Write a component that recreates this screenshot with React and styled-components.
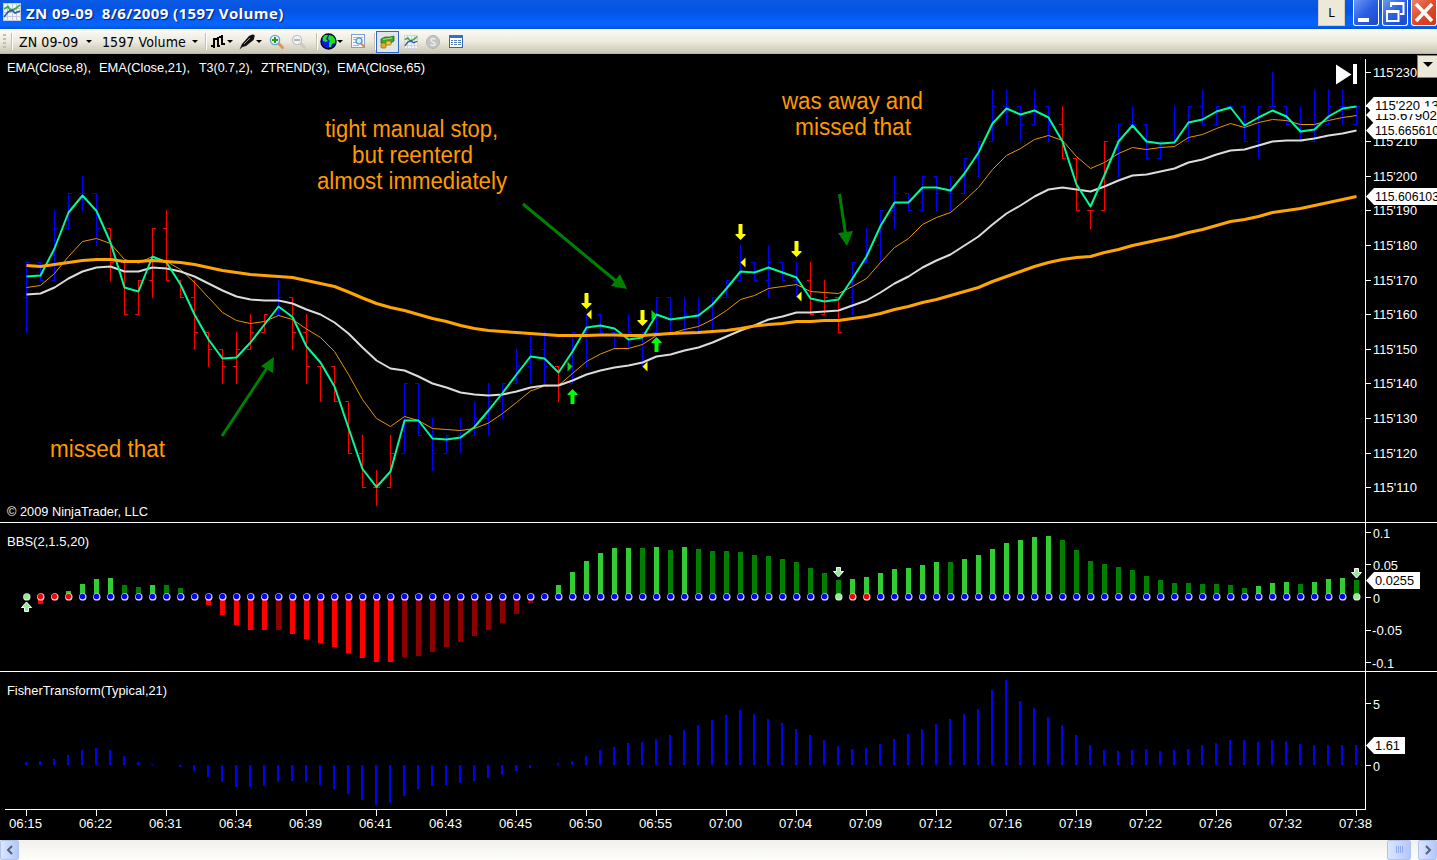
import React from 'react'
import styled, { createGlobalStyle } from 'styled-components'

const FIRST_X = 26
const STEP = 14
const xOf = i => FIRST_X + i * STEP
// one level is half a tick, level 0 is 115'230
const levelY = l => Math.round(71.7 + l * 17.32)

// [high, low, open, close] in levels
const bars = [
  [11,15,13,11],[11,12,11,12],[8,12,12,9],[7,9,9,7],[6,8,7,7],[7,10,7,9],[9,12,9,11],[11,14,11,14],
  [12,14,14,12],[9,13,12,9],[8,12,9,12],[12,13,12,13],[12,16,13,15],[15,17,15,16],[16,18,16,17],[15,18,17,16],
  [14,16,16,15],[14,15,15,14],[12,14,14,13],[13,16,13,15],[14,18,15,17],[17,19,17,17],[17,19,17,19],[19,22,19,22],
  [21,24,22,24],[23,25,24,24],[21,24,24,22],[18,22,22,18],[18,21,18,21],[20,23,21,22],[21,22,22,21],[20,22,21,21],
  [19,21,21,20],[18,21,20,19],[18,20,19,18],[16,18,18,17],[15,18,17,16],[15,18,16,17],[17,19,17,18],[15,18,18,15],
  [14,17,15,14],[14,15,14,15],[15,16,15,16],[14,16,16,15],[15,17,16,15],[13,15,15,13],[13,15,13,15],[13,15,15,14],
  [13,15,14,14],[13,15,15,13],[12,13,13,12],[10,12,12,11],[11,12,11,12],[10,13,12,11],[11,12,11,12],[11,13,12,13],
  [11,14,12,14],[12,14,14,13],[13,15,13,15],[11,14,13,11],[9,11,11,10],[8,11,10,8],[6,9,8,7],[7,8,7,8],
  [6,8,8,6],[6,8,6,7],[6,8,7,7],[5,7,7,5],[4,6,5,4],[1,4,4,2],[1,3,2,2],[2,4,2,3],
  [1,3,3,2],[2,4,2,3],[2,5,3,5],[5,8,5,8],[8,9,8,8],[4,8,8,4],[3,6,4,3],[2,3,3,3],
  [3,5,3,5],[4,5,5,4],[2,4,4,4],[2,4,4,2],[1,3,2,3],[2,3,3,2],[2,2,2,2],[2,4,2,4],
  [2,5,4,2],[0,2,2,2],[2,3,2,3],[2,4,3,4],[1,4,4,3],[1,3,3,2],[1,3,2,2],[2,3,3,2],
]
const isRed = i => (i >= 6 && i <= 17) || (i >= 19 && i <= 26) || i === 38 || (i >= 56 && i <= 58) || (i >= 74 && i <= 77)

const t3 = [
  276.5,275.5,248.5,212.5,195.5,211,242.5,287.5,291.5,256.5,262.5,284.5,314.5,339.5,358.5,357.5,342.5,324.5,306.5,317,
  346.5,362.5,386.5,428,469,487,471.5,420.5,420.5,438.5,439.5,437.5,427,410.5,393,374.5,356.5,358.5,372.5,351.5,
  327.5,325.5,328.5,339.5,337.5,314.5,319.5,317.5,315.5,304.5,288.5,271.5,272.5,267.5,272.5,277.5,298.5,301.5,299.5,278.5,
  256.5,226,202.5,202.5,187.5,187.5,190.5,173.5,152.5,123.5,108.5,114.5,110.5,117.5,141.5,184.5,206.5,175,141.5,125.5,
  141.5,143.5,142.5,122.5,119.5,111.5,107.5,125.5,117.5,110.5,116.5,131.5,129.5,116.5,108.5,106.5,
]
const ema8 = [
  287.5,285.5,273.5,256.5,241.5,238.5,243.5,259.5,263,256.5,261.5,269.5,282.5,297.5,312.5,320.5,323.5,321.5,315.5,319.5,
  329,337.5,351.5,374.5,399.5,418.5,426.5,416.5,420.5,428.5,429.5,430.5,428.5,423,413.5,402.5,391,386,385.5,373.5,
  361.5,354,348.5,348.5,344.5,335.5,333.5,329.5,326.5,319.5,310.5,299.5,295.5,288.5,286.5,284.5,291.5,292.5,293.5,286.5,
  278.5,262.5,247.5,238.5,224.5,217.5,212.5,200.5,187.5,169.5,155.5,148.5,139.5,135.5,140.5,156.5,168.5,162.5,153.5,147.5,
  149.5,147.5,146.5,137.5,134.5,128.5,123.5,127.5,122.5,119.5,120.5,124.5,124.5,120.5,117.5,115.5,
]
const ema21 = [
  294.5,293.5,287.5,278.5,271.5,267.5,266.5,271.5,271.5,267.5,268.5,271.5,276.5,283.5,290.5,296.5,299.5,300.5,300.5,303.5,
  309.5,314.5,322.5,333.5,347.5,360.5,368.5,370.5,376.5,383.5,387.5,392.5,394.5,395.5,394.5,391.5,387.5,385.5,385.5,380.5,
  374.5,370.5,367.5,365.5,362.5,356.5,354.5,350.5,347.5,342.5,336.5,330.5,325.5,319.5,316.5,312.5,312.5,311.5,310.5,305.5,
  300.5,292.5,283.5,276.5,267.5,260.5,254.5,245.5,236.5,224.5,213.5,205.5,196.5,189.5,187.5,189.5,191.5,186.5,180.5,175.5,
  174.5,171.5,168.5,162.5,159.5,154.5,150.5,149.5,145.5,141.5,140.5,140.5,138.5,135.5,133.5,130.5,
]
const ema65 = [
  265.5,266.5,264.5,262.5,260.5,259.5,259.5,261.5,261.5,260.5,261.5,262.5,264.5,267.5,270.5,272.5,274.5,275.5,276.5,277.5,
  280.5,283.5,286.5,292,298,303.5,307.5,310.5,314.5,318.5,321.5,325.5,328.5,330.5,331.5,332.5,333.5,334.5,335.5,335.5,
  335.5,335,335,335.5,335.5,334.5,333.5,333,332.5,331.5,330.5,328.5,326,324.5,323.5,321.5,321.5,320.5,320.5,318.5,
  316.5,313.5,309.5,306.5,302.5,299.5,295.5,291.5,287.5,281.5,276.5,271.5,266.5,262.5,259.5,257.5,256.5,252.5,249.5,245.5,
  242.5,239.5,236.5,232.5,229.5,225.5,221.5,219.5,216.5,212.5,210.5,208.5,205.5,202.5,199.5,196.5,
]

// end of every BBS bar; g/G rising and fading green, r/R rising and fading red
const bbs = '- r604 - g591 g584 g579 g578 G585 G587 g585 G585 G588 - r605 r615 r625 r630 r630 R630 r634 r639 r643 r647 r653 r658 r662 r662 R657 R656 R652 R647 R642 R636 R630 R623 R614 R603 - g585 g572 g561 g553 g548 g548 G548 g547 G550 g547 G549 G551 G551 G552 G555 G556 G559 G562 G568 G573 G580 g579 g577 g573 g569 g568 g565 g562 G562 g559 g555 g549 g543 g540 g537 g536 G540 G550 G561 G564 G567 G570 G576 G580 G583 G583 G584 G584 G585 G588 g586 g583 g582 G584 g582 g579 g578 G580'.split(' ')
const bbsColors = { g: '#32cd32', G: '#008000', r: '#ff0000', R: '#8b0000' }
const dotColor = i => {
  if (i === 0 || i === 58 || i === 95) return '#90ee90'
  if ((i > 0 && i < 4) || i === 59 || i === 60) return '#ff0000'
  return '#0000ff'
}

const fisher = [
  762,761,759,755,750,748,750,756,762,764,765,767,771,777,782,787,787,786,782,781,782,785,789,794,800,805,803,796,789,786,
  785,783,781,778,775,771,768,765,763,761,756,750,747,743,742,739,735,730,725,720,715,710,714,719,723,729,735,740,746,749,
  748,744,739,734,729,724,719,714,709,690,680,701,708,717,725,735,745,750,751,750,749,751,750,749,745,743,740,740,742,740,
  741,744,745,745,745,745,
]

const times = ['06:15','06:22','06:31','06:34','06:39','06:41','06:43','06:45','06:50','06:55','07:00','07:04','07:09','07:12','07:16','07:19','07:22','07:26','07:32','07:38']
const prices = ["115'230","115'220","115'210","115'200","115'190","115'180","115'170","115'160","115'150","115'140","115'130","115'120","115'110"]

const toPoints = ys => ys.map((y, i) => `${xOf(i) + 0.5},${y}`).join(' ')

const Label = ({ x, y, w, children, fill = '#fff' }) => (
  <ChartText x={x} y={y} fill={fill} textLength={w} lengthAdjust="spacingAndGlyphs">{children}</ChartText>
)

const Tag = ({ y, w, textW, children }) => (
  <g>
    <path d={`M1366 ${y} L1374 ${y - 8.5} H${1366 + w} V${y + 8.5} H1374 Z`} fill="#fff" />
    <Label x={1375} y={y + 4.5} w={textW} fill="#000">{children}</Label>
  </g>
)

const DownArrow = ({ x, y }) => (
  <path d={`M${x - 2} ${y} h4 v10 h3 v1 l-5 5 l-5 -5 v-1 h3 z`} fill="#ffff00" />
)
const UpArrow = ({ x, y }) => (
  <path d={`M${x - 2} ${y + 15} h4 v-9 h3 v-1 l-5 -5 l-5 5 v1 h3 z`} fill="#00ff00" />
)

const Note = ({ x, y, w, children }) => (
  <NoteText x={x} y={y} textLength={w} lengthAdjust="spacingAndGlyphs">{children}</NoteText>
)

const PricePanel = () => (
  <Panel height={469}>
    <Plot viewBox="0 54 1437 469" height="469">
      <path d="M0 522.5 H1437 M1365.5 59 V523" stroke="#fff" />
      <g shapeRendering="crispEdges">
        {bars.map(([h, l, o, c], i) => (
          <path
            key={i}
            d={`M${xOf(i) + 0.5} ${levelY(h)} V${levelY(l) + 1} M${xOf(i) - 3} ${levelY(o) + 0.5} h3 M${xOf(i) + 1} ${levelY(c) + 0.5} h3`}
            stroke={isRed(i) ? '#ff0000' : '#0000ff'}
          />
        ))}
      </g>
      <Line points={toPoints(ema8)} stroke="#e89600" strokeWidth="1" />
      <Line points={toPoints(ema21)} stroke="#dcdcdc" strokeWidth="2" />
      <Line points={toPoints(t3)} stroke="#00fa9a" strokeWidth="2" />
      <Line points={toPoints(ema65)} stroke="#ffa500" strokeWidth="3" />

      <DownArrow x={586.5} y={293} />
      <DownArrow x={642.5} y={310} />
      <DownArrow x={740.5} y={224} />
      <DownArrow x={796.5} y={241} />
      <UpArrow x={572.5} y={389} />
      <UpArrow x={656.5} y={337} />
      <path d="M586.5 314.5 l5 -5 v10 z M642.5 366.5 l5 -5 v10 z M740.5 262.5 l5 -5 v10 z M796.5 296.5 l5 -5 v10 z" fill="#ffff00" />
      <path d="M572.5 366.5 l-5 -5 v10 z M656.5 315 l-5 -5 v10 z" fill="#00e000" />

      <g stroke="#008000" strokeWidth="3" fill="#008000">
        <path d="M222 436 L267 368 M523 204 L616 281 M839.5 194 L845.5 234" />
        <path d="M274 357 L261 366 L273 373 Z M627 289 L620 274 L611 286 Z M847 246 L838 233 L853 231 Z" stroke="none" />
      </g>

      <Note x={50} y={457} w={115}>missed that</Note>
      <Note x={325} y={137} w={173}>tight manual stop,</Note>
      <Note x={352} y={163} w={121}>but reenterd</Note>
      <Note x={317} y={189} w={190}>almost immediately</Note>
      <Note x={782} y={109} w={141}>was away and</Note>
      <Note x={795} y={135} w={116}>missed that</Note>

      <path d="M1336 64.5 L1351.5 74.5 L1336 84.5 Z M1353 64 h4 v20 h-4 z" fill="#fff" />

      <Label x={7} y={72} w={84}>EMA(Close,8),</Label>
      <Label x={99} y={72} w={91}>EMA(Close,21),</Label>
      <Label x={199} y={72} w={54}>T3(0.7,2),</Label>
      <Label x={261} y={72} w={69}>ZTREND(3),</Label>
      <Label x={337} y={72} w={88}>EMA(Close,65)</Label>
      <Label x={7} y={516} w={141}>© 2009 NinjaTrader, LLC</Label>

      {prices.map((p, i) => (
        <g key={p}>
          <path d={`M1366 ${levelY(i * 2) + 0.5} h5`} stroke="#fff" />
          <Label x={1373} y={levelY(i * 2) + 5} w={44}>{p}</Label>
        </g>
      ))}
      <Tag y={105.5} w={75} textW={64}>115.70313</Tag>
      <Tag y={115} w={75} textW={62}>115.67902</Tag>
      <Tag y={130.5} w={75} textW={64}>115.665610</Tag>
      <Tag y={105.5} w={57} textW={45}>115'220</Tag>
      <Tag y={196.5} w={75} textW={64}>115.606103</Tag>
    </Plot>
    <PanelMenu>
      <Caret />
    </PanelMenu>
  </Panel>
)

const BbsPanel = () => (
  <Panel height={149}>
    <Plot viewBox="0 523 1437 149" height="149">
      <path d="M0 671.5 H1437 M1365.5 523 V672" stroke="#fff" />
      {bbs.map((b, i) => {
        if (b === '-') return null
        const end = Number(b.slice(1))
        return <rect key={i} x={xOf(i) - 2} y={Math.min(end, 597)} width="5" height={Math.abs(end - 597)} fill={bbsColors[b[0]]} />
      })}
      {bbs.map((b, i) => (
        <g key={i}>
          <circle cx={xOf(i) + 0.8} cy="596.9" r="3.7" fill="#e4e4ec" />
          <circle cx={xOf(i) + 0.5} cy="596.5" r="2.8" fill={dotColor(i)} />
        </g>
      ))}
      <g fill="#90ee90" stroke="#fff">
        <path d="M24.5 611.5 v-4 h-3 l5 -5.5 l5 5.5 h-3 v4 z" />
        <path d="M836.5 567.5 v4 h-3 l5 5.5 l5 -5.5 h-3 v-4 z" />
        <path d="M1354.5 568.5 v4 h-3 l5 5.5 l5 -5.5 h-3 v-4 z" />
      </g>
      <Label x={7} y={546} w={82}>BBS(2,1.5,20)</Label>
      <path d="M1366 532.5 h5 M1366 564.5 h5 M1366 597.5 h5 M1366 630.5 h5 M1366 662.5 h5" stroke="#fff" />
      <Label x={1373} y={538} w={17}>0.1</Label>
      <Label x={1373} y={570} w={25}>0.05</Label>
      <Label x={1373} y={603} w={7}>0</Label>
      <Label x={1372} y={635} w={30}>-0.05</Label>
      <Label x={1372} y={668} w={22}>-0.1</Label>
      <Tag y={580.5} w={54} textW={39}>0.0255</Tag>
    </Plot>
  </Panel>
)

const FisherPanel = () => (
  <Panel height={168}>
    <Plot viewBox="0 672 1437 168" height="168">
      <path d="M5 809.5 H1366 M1365.5 672 V810" stroke="#fff" />
      {fisher.map((y, i) => (
        <rect key={i} x={xOf(i) - 1} y={Math.min(y, 765)} width="2" height={Math.abs(y - 765)} fill="#0000f4" />
      ))}
      <Label x={7} y={695} w={160}>FisherTransform(Typical,21)</Label>
      <path d="M1366 703.5 h5 M1366 765.5 h5" stroke="#fff" />
      <Label x={1373} y={709} w={7}>5</Label>
      <Label x={1373} y={771} w={7}>0</Label>
      <Tag y={745.5} w={39} textW={25}>1.61</Tag>
      {times.map((t, i) => (
        <g key={t}>
          <path d={`M${xOf(i * 5) + 0.5} 810 v6`} stroke="#fff" />
          <Label x={9 + i * 70} y={828} w={33}>{t}</Label>
        </g>
      ))}
    </Plot>
  </Panel>
)

const ChartIcon = ({ size = 18 }) => (
  <svg width={size} height={size} viewBox="0 0 18 18">
    <rect x="0.5" y="0.5" width="17" height="17" fill="#f4f4f8" stroke="#c8ccd8" />
    <path d="M4.5 1 V17 M9.5 1 V17 M13.5 1 V17 M1 5.5 H17 M1 9.5 H17 M1 13.5 H17" stroke="#c4c8dc" />
    <path d="M1 6 L5 3.5 L8 8 L12 6 L17 2" fill="none" stroke="#3cb43c" strokeWidth="2" />
    <path d="M1 14 L5 9 L9 7 L12 10 L17 8" fill="none" stroke="#2a5a9c" strokeWidth="1.6" />
  </svg>
)

const BarsIcon = () => (
  <svg width="14" height="16" viewBox="0 0 14 16">
    <path d="M3 4 V14 M0 12 H3 M3 5 H6 M7 3 V13 M7 12 H9 M11 1 V11 M11 10 H14 M8 3 H11" stroke="#000" strokeWidth="2" />
  </svg>
)

const PenIcon = () => (
  <svg width="16" height="16" viewBox="0 0 16 16">
    <path d="M0.5 15.5 L3 10 L10 2 Q13.5 -0.5 15.5 1 Q16 3 14.5 6 L7 12 L3.5 13 Z" fill="#111" />
    <path d="M5 10 L11 4" stroke="#999" />
  </svg>
)

const ZoomIcon = ({ ring, handle, sign, plus }) => (
  <svg width="16" height="16" viewBox="0 0 16 16">
    <path d="M9 9 L13.5 13.5" stroke={handle} strokeWidth="3" strokeLinecap="round" />
    <circle cx="6" cy="6" r="4.6" fill="#eef4f8" stroke={ring} strokeWidth="1.4" />
    <path d={plus ? 'M3 6 H9 M6 3 V9' : 'M3 6 H9'} stroke={sign} strokeWidth="2" />
  </svg>
)

const GlobeIcon = () => (
  <svg width="17" height="17" viewBox="0 0 17 17">
    <circle cx="8.5" cy="8.5" r="7.5" fill="#0018e8" stroke="#000010" strokeWidth="1.4" />
    <path d="M2.5 4.5 L5 2 L8 2 L7 4 L6 6 L8 8 L6 9 L3 8 Z M9 2 L13 3 L15.5 7 L15 10 L12 11 L11 14 L9 14 L9 10 L10 8 L8 6 Z" fill="#20e020" />
  </svg>
)

const FindIcon = () => (
  <svg width="15" height="15" viewBox="0 0 15 15">
    <rect x="0.5" y="0.5" width="13" height="13" fill="#f2f8fd" stroke="#7ba3cf" />
    <path d="M2 3.5 H12 M2 5.5 H5 M2 8.5 H5 M2 11.5 H8" stroke="#9ab8d8" />
    <circle cx="8" cy="7" r="3" fill="#d8ecf8" stroke="#4a86c0" strokeWidth="1.2" />
    <path d="M10 9.5 L13.5 13" stroke="#d8864a" strokeWidth="2" />
  </svg>
)

const TraderIcon = () => (
  <svg width="15" height="14" viewBox="0 0 15 14">
    <path d="M1 4 L5 2 L10 2 L14 1 V6 L9 9 L1 8 Z" fill="#3fa52c" stroke="#276c1c" strokeWidth="0.8" />
    <path d="M3 4.5 L12 3" stroke="#a6e08a" />
    <rect x="1" y="8" width="5" height="5" rx="1" fill="#e0b020" stroke="#94700c" strokeWidth="0.8" />
    <rect x="6" y="6" width="5" height="4" rx="1" fill="#f0cc40" stroke="#94700c" strokeWidth="0.8" />
  </svg>
)

const CoinIcon = () => (
  <svg width="14" height="14" viewBox="0 0 14 14">
    <circle cx="7" cy="7" r="6.5" fill="#c4c4c0" stroke="#b4b4b0" />
    <path d="M9.5 4.3 Q7 2.8 5.2 4.2 Q4.4 6 7 7 Q9.8 8 9 9.6 Q7.2 11.2 4.6 9.7" fill="none" stroke="#ececea" strokeWidth="1.5" />
  </svg>
)

const TableIcon = () => (
  <svg width="14" height="13" viewBox="0 0 14 13">
    <rect x="0.5" y="0.5" width="13" height="12" fill="#fff" stroke="#2f66b4" />
    <rect x="0" y="0" width="14" height="3" fill="#2f6fd0" />
    <path d="M2 5.5 H4 M5 5.5 H8 M9 5.5 H12 M2 7.5 H4 M5 7.5 H8 M9 7.5 H12 M2 9.5 H4 M5 9.5 H8 M9 9.5 H12" stroke="#5a84bc" />
  </svg>
)

const App = () => {
  return (
    <Window>
      <GlobalStyle />
      <TitleBar>
        <ChartIcon />
        <Title>ZN 09-09&nbsp; 8/6/2009 (1597 Volume)</Title>
        <LinkButton>L</LinkButton>
        <WindowButtons>
          <WindowButton>
            <svg width="26" height="26"><rect x="4" y="18" width="11" height="4" fill="#fff" /></svg>
          </WindowButton>
          <WindowButton>
            <svg width="26" height="26"><path d="M8 7 V3 H20.5 V14 H17 M8 4 H20 M4 11 H15.5 V21 H4 Z M4 12 H15" fill="none" stroke="#fff" strokeWidth="2" /></svg>
          </WindowButton>
          <WindowButton $close>
            <svg width="26" height="26"><path d="M4 4 L20 21 M20 4 L4 21" stroke="#fff" strokeWidth="3.6" /></svg>
          </WindowButton>
        </WindowButtons>
      </TitleBar>
      <Toolbar>
        <Grip />
        <Separator $left={5} />
        <ToolText $left={6} $width={61}>ZN 09-09</ToolText>
        <Caret $left={6} />
        <ToolText $left={10} $width={84}>1597 Volume</ToolText>
        <Caret $left={6} />
        <Separator $left={7} />
        <Tool $left={4}><BarsIcon /></Tool>
        <Caret $left={2} />
        <Tool $left={6}><PenIcon /></Tool>
        <Caret $left={1} />
        <Tool $left={7}><ZoomIcon ring="#6aa4c8" handle="#e8905c" sign="#18a018" plus /></Tool>
        <Tool $left={6}><ZoomIcon ring="#c4c4c0" handle="#c8c8c4" sign="#b4b4b0" /></Tool>
        <Separator $left={9} />
        <Tool $left={2}><GlobeIcon /></Tool>
        <Caret $left={0} />
        <Tool $left={8}><FindIcon /></Tool>
        <Separator $left={8} />
        <ActiveTool><TraderIcon /></ActiveTool>
        <Tool $left={5}><ChartIcon size={14} /></Tool>
        <Tool $left={8}><CoinIcon /></Tool>
        <Tool $left={9}><TableIcon /></Tool>
      </Toolbar>
      <PricePanel />
      <BbsPanel />
      <FisherPanel />
      <ScrollBar>
        <ScrollButton>
          <svg width="8" height="10"><path d="M6 1 L2 5 L6 9" fill="none" stroke="#4d6185" strokeWidth="2" /></svg>
        </ScrollButton>
        <ScrollThumb>
          <svg width="9" height="8"><path d="M1.5 0 V7 M3.5 0 V7 M5.5 0 V7 M7.5 0 V7" stroke="#8caaee" /></svg>
        </ScrollThumb>
        <ScrollButton>
          <svg width="8" height="10"><path d="M2 1 L6 5 L2 9" fill="none" stroke="#4d6185" strokeWidth="2" /></svg>
        </ScrollButton>
      </ScrollBar>
    </Window>
  )
}

const GlobalStyle = createGlobalStyle`
    body {
        margin: 0;
        background: #000;
        overflow: hidden;
    }
    svg {
        display: block;
    }
`
const Window = styled.div`
    width: 1437px;
    height: 860px;
    display: flex;
    flex-direction: column;
    overflow: hidden;
    background: #000;
`
const TitleBar = styled.div`
    height: 29px;
    flex-shrink: 0;
    box-sizing: border-box;
    padding-left: 3px;
    display: flex;
    align-items: flex-start;
    background: linear-gradient(#0a5ae4 0, #0453e4 10px, #0560fa 20px, #0566ff 25px, #0450d0 29px);
    > svg {
        margin-top: 3px;
    }
`
const Title = styled.div`
    flex: 1;
    margin-left: 5px;
    line-height: 27px;
    font-family: "Open Sans", "Noto Sans", sans-serif;
    font-size: 15px;
    font-weight: 700;
    letter-spacing: 0.4px;
    color: #fff;
    text-shadow: 1px 1px 1px #0a1883;
    white-space: nowrap;
`
const LinkButton = styled.div`
    width: 27px;
    height: 26px;
    margin-right: 8px;
    box-sizing: border-box;
    border: 1px solid #d0ccb8;
    border-top: none;
    background: #ece9d8;
    font-family: "DejaVu Sans Condensed", "DejaVu Sans", sans-serif;
    font-size: 13px;
    line-height: 25px;
    text-align: center;
    color: #000;
`
const WindowButtons = styled.div`
    display: flex;
    gap: 3px;
`
const WindowButton = styled.div`
    width: 26px;
    height: 26px;
    box-sizing: border-box;
    border: 1px solid #fff;
    border-top: none;
    border-radius: 0 0 3px 3px;
    overflow: hidden;
    background: ${props => props.$close
      ? 'linear-gradient(135deg, #ec8468, #e0492a 50%, #c83c18)'
      : 'linear-gradient(135deg, #6c98f4, #2a5ee4 50%, #1c48cc)'};
`
const Toolbar = styled.div`
    height: 25px;
    flex-shrink: 0;
    box-sizing: border-box;
    padding-left: 3px;
    display: flex;
    align-items: center;
    background: linear-gradient(#fcfbf7, #edeade 50%, #c9c6b4 96%, #a8a594);
`
const Grip = styled.div`
    width: 3px;
    height: 16px;
    background: repeating-linear-gradient(#c1beae 0 2px, transparent 2px 4px);
`
const Separator = styled.div`
    width: 1px;
    height: 17px;
    margin-left: ${props => props.$left}px;
    background: #c5c2b0;
    border-right: 1px solid #fff;
`
const ToolText = styled.div`
    width: ${props => props.$width}px;
    margin-left: ${props => props.$left}px;
    font-family: "DejaVu Sans Condensed", "DejaVu Sans", sans-serif;
    font-size: 14px;
    font-stretch: condensed;
    letter-spacing: 0.1px;
    line-height: 24px;
    color: #000;
    white-space: nowrap;
`
const Caret = styled.div`
    width: 0;
    height: 0;
    margin-left: ${props => props.$left || 0}px;
    border: 3px solid transparent;
    border-top-color: #000;
    border-bottom: none;
`
const Tool = styled.div`
    margin-left: ${props => props.$left}px;
`
const ActiveTool = styled.div`
    width: 23px;
    height: 22px;
    box-sizing: border-box;
    border: 1px solid #316ac5;
    background: #e1e6e8;
    display: flex;
    align-items: center;
    justify-content: center;
`
const Panel = styled.div`
    position: relative;
    height: ${props => props.height}px;
    flex-shrink: 0;
`
const Plot = styled.svg`
    width: 1437px;
`
const Line = styled.polyline`
    fill: none;
    stroke-linejoin: round;
`
const ChartText = styled.text`
    font-family: "Liberation Sans", Arial, sans-serif;
    font-size: 13.5px;
`
const NoteText = styled.text`
    font-family: "Liberation Sans", Arial, sans-serif;
    font-size: 23.5px;
    fill: #ff9900;
`
const PanelMenu = styled.div`
    position: absolute;
    top: 1px;
    right: -1px;
    width: 21px;
    height: 23px;
    box-sizing: border-box;
    border: 1px solid #5a86b4;
    background: #ece9d8;
    display: flex;
    align-items: center;
    justify-content: center;
    padding-bottom: 4px;
    ${Caret} {
        border-width: 5px 5px 0;
    }
`
const ScrollBar = styled.div`
    height: 20px;
    flex-shrink: 0;
    display: flex;
    background: linear-gradient(#f2f0ec, #fefefb);
`
const ScrollButton = styled.div`
    width: 19px;
    height: 20px;
    box-sizing: border-box;
    border: 1px solid #b0c4f0;
    border-radius: 2px;
    background: linear-gradient(90deg, #dbe5fd, #b4c8f6);
    display: flex;
    align-items: center;
    justify-content: center;
`
const ScrollThumb = styled(ScrollButton)`
    width: 24px;
    margin-left: auto;
    margin-right: 7px;
`
export default App
